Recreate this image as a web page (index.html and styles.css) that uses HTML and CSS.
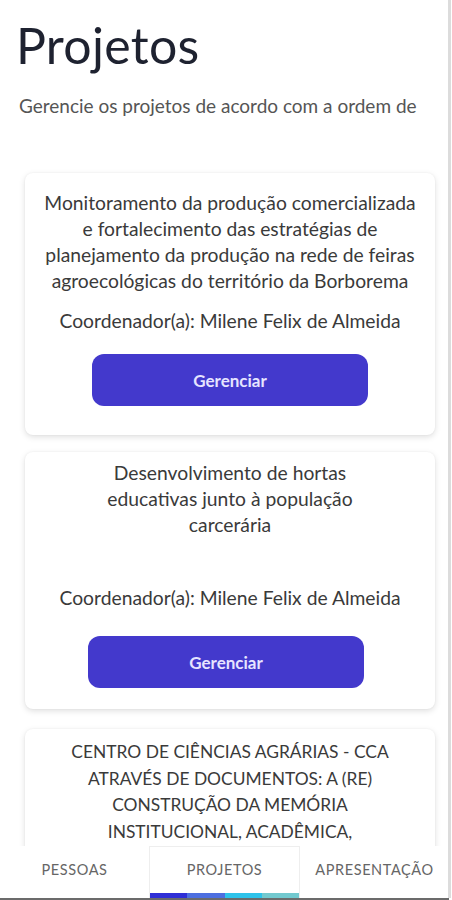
FILE: index.html
```html
<!DOCTYPE html>
<html lang="pt-BR">
<head>
<meta charset="utf-8">
<title>Projetos</title>
<link rel="stylesheet" href="styles.css">
</head>
<body>
<div class="screen">
  <main class="content">
    <h1 class="title">Projetos</h1>
    <p class="subtitle">Gerencie os projetos de acordo com a ordem de</p>

    <section class="card">
      <p class="card-title">Monitoramento da produção comercializada e fortalecimento das estratégias de planejamento da produção na rede de feiras agroecológicas do território da Borborema</p>
      <p class="coord">Coordenador(a): Milene Felix de Almeida</p>
      <button class="btn">Gerenciar</button>
    </section>

    <section class="card second">
      <p class="card-title short">Desenvolvimento de hortas educativas junto à população carcerária</p>
      <p class="coord">Coordenador(a): Milene Felix de Almeida</p>
      <button class="btn">Gerenciar</button>
    </section>

    <section class="card third">
      <p class="card-title">CENTRO DE CIÊNCIAS AGRÁRIAS - CCA ATRAVÉS DE DOCUMENTOS: A (RE) CONSTRUÇÃO DA MEMÓRIA INSTITUCIONAL, ACADÊMICA, CIENTÍFICA E CULTURAL</p>
      <p class="coord">Coordenador(a): Milene Felix de Almeida</p>
      <button class="btn">Gerenciar</button>
    </section>
  </main>

  <nav class="tabs">
    <div class="tab">PESSOAS</div>
    <div class="tab active">PROJETOS
      <span class="indicator"><i class="s1"></i><i class="s2"></i><i class="s3"></i><i class="s4"></i></span>
    </div>
    <div class="tab">APRESENTAÇÃO</div>
  </nav>
  <div class="scrollbar"></div>
</div>
</body>
</html>
```

FILE: styles.css
```css
* { box-sizing: border-box; }

html, body {
  margin: 0;
  padding: 0;
  background: #ffffff;
  height: 100%;
  overflow: hidden;
}

body {
  font-family: Lato, "Open Sans", "Liberation Sans", sans-serif;
  color: #333;
}

.screen {
  width: 452px;
  height: 900px;
  overflow: hidden;
  position: relative;
}

.content {
  padding: 0 17px 0 25px;
}

.title {
  margin: 0 0 0 -9px;
  padding-top: 17px;
  font-size: 50px;
  font-weight: 400;
  line-height: 56px;
  color: #1e2230;
  letter-spacing: 0.3px;
}

.subtitle {
  margin: 22px 0 0 -6px;
  font-size: 19px;
  line-height: 22px;
  color: #555;
}

.card {
  width: 410px;
  margin-top: 56px;
  background: #fff;
  border-radius: 8px;
  box-shadow: 0 2px 6px rgba(0,0,0,0.13), 0 0 2px rgba(0,0,0,0.05);
  padding: 17px 16px 29px;
  display: flex;
  flex-direction: column;
  align-items: center;
  text-align: center;
}

.card.second {
  margin-top: 17px;
  padding-top: 8px;
  padding-bottom: 21px;
}

.card.third {
  margin-top: 20px;
  padding-top: 10px;
}

.card-title {
  margin: 0;
  font-size: 19.3px;
  line-height: 26px;
  color: #3a3a3a;
  min-height: 104px;
}

.card-title.short {
  min-height: 111px;
  max-width: 262px;
}

.third .card-title {
  font-size: 17.4px;
  line-height: 26.7px;
  max-width: 340px;
}

.coord {
  margin: 14px 0 0;
  font-size: 19.3px;
  line-height: 26px;
  color: #3a3a3a;
}

.btn {
  margin-top: 20px;
  width: 276px;
  height: 52px;
  border: none;
  border-radius: 12px;
  background: #4339cc;
  color: #e6e4ff;
  font-family: inherit;
  font-size: 17px;
  font-weight: 700;
}

.second .btn {
  margin-top: 25px;
  margin-right: 8px;
}

.tabs {
  position: fixed;
  left: 0;
  bottom: 0;
  width: 449px;
  height: 54px;
  background: #fff;
  display: flex;
  border-bottom: 2px solid #6b6b6b;
}

.tab {
  flex: 1;
  position: relative;
  display: flex;
  align-items: center;
  justify-content: center;
  padding-bottom: 6px;
  font-size: 14.5px;
  color: #666;
  letter-spacing: 0.6px;
}

.tab.active {
  border-left: 1px solid #eee;
  border-right: 1px solid #eee;
  border-top: 1px solid #eee;
}

.indicator {
  position: absolute;
  left: 0;
  right: 0;
  bottom: 0;
  height: 5px;
  display: flex;
}

.indicator i { flex: 1; }
.s1 { background: #2f2fd6; }
.s2 { background: #4d6fe0; }
.s3 { background: #2ec3ea; }
.s4 { background: #72c9cf; }

.scrollbar {
  position: absolute;
  top: 0;
  right: 1px;
  width: 3px;
  height: 898px;
  background: #dcdcdc;
}
```
